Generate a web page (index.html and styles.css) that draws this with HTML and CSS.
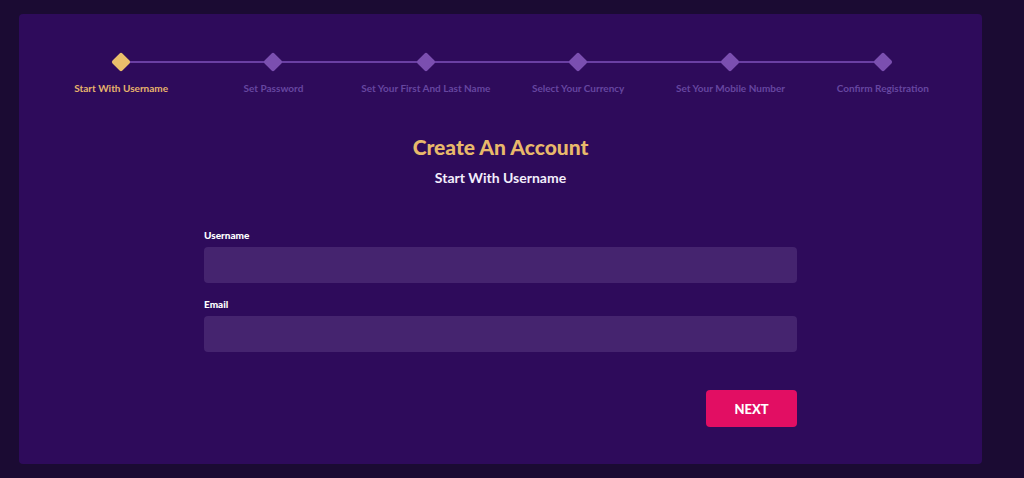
FILE: index.html
```html
<!DOCTYPE html>
<html>
<head>
<meta charset="utf-8">
<link rel="stylesheet" href="styles.css">
</head>
<body>
<div class="page">
  <div class="card">
    <div class="stepper">
      <div class="line"></div>
      <div class="step active"><span class="dot"></span><span class="label">Start With Username</span></div>
      <div class="step"><span class="dot"></span><span class="label">Set Password</span></div>
      <div class="step"><span class="dot"></span><span class="label">Set Your First And Last Name</span></div>
      <div class="step"><span class="dot"></span><span class="label">Select Your Currency</span></div>
      <div class="step"><span class="dot"></span><span class="label">Set Your Mobile Number</span></div>
      <div class="step"><span class="dot"></span><span class="label">Confirm Registration</span></div>
    </div>
    <h1 class="title">Create An Account</h1>
    <h2 class="subtitle">Start With Username</h2>
    <form class="form">
      <label class="field-label">Username</label>
      <input class="field" type="text">
      <label class="field-label">Email</label>
      <input class="field" type="text">
      <div class="actions"><button type="button" class="next">NEXT</button></div>
    </form>
  </div>
</div>
</body>
</html>
```
FILE: styles.css
```css
html, body { margin: 0; padding: 0; }
body {
  background: #1b0b33;
  font-family: Lato, "Open Sans", sans-serif;
  width: 1024px;
  height: 478px;
  overflow: hidden;
}
.page { padding: 14px 42px 0 19px; }
.card {
  background: #2e0b5b;
  border-radius: 4px;
  width: 963px;
  height: 450px;
  box-sizing: border-box;
  padding-top: 41px;
}
.stepper {
  position: relative;
  display: flex;
  margin: 0 23px 0 26px;
}
.line {
  position: absolute;
  left: 76px;
  right: 76px;
  top: 6px;
  height: 2px;
  background: #6a3fa3;
}
.step {
  flex: 1;
  display: flex;
  flex-direction: column;
  align-items: center;
  position: relative;
}
.dot {
  width: 14px;
  height: 14px;
  border-radius: 2px;
  background: #7b4fb0;
  transform: rotate(45deg);
}
.step.active .dot { background: #eabf6b; }
.label {
  margin-top: 13px;
  font-size: 10px;
  font-weight: 700;
  color: #6646a0;
  white-space: nowrap;
}
.step.active .label { color: #e7b46c; }
.title {
  margin: 40px 0 0;
  text-align: center;
  font-size: 21px;
  font-weight: 900;
  color: #e8b96b;
  line-height: 26px;
}
.subtitle {
  margin: 9px 0 0;
  text-align: center;
  font-size: 14px;
  font-weight: 700;
  color: #f3eefb;
  line-height: 18px;
}
.form {
  width: 593px;
  margin: 42px auto 0;
  display: flex;
  flex-direction: column;
}
.field-label {
  font-size: 10px;
  font-weight: 900;
  color: #ffffff;
  line-height: 12px;
  margin-bottom: 6px;
}
.field {
  height: 36px;
  border: none;
  border-radius: 4px;
  background: #45246f;
  margin: 0 0 15px;
  padding: 0 12px;
  box-sizing: border-box;
  outline: none;
}
.actions {
  display: flex;
  justify-content: flex-end;
  margin-top: 23px;
}
.next {
  width: 91px;
  height: 37px;
  border: none;
  border-radius: 4px;
  background: #e20e63;
  color: #ffffff;
  font-family: Lato, sans-serif;
  font-weight: 900;
  font-size: 13px;
}
```
